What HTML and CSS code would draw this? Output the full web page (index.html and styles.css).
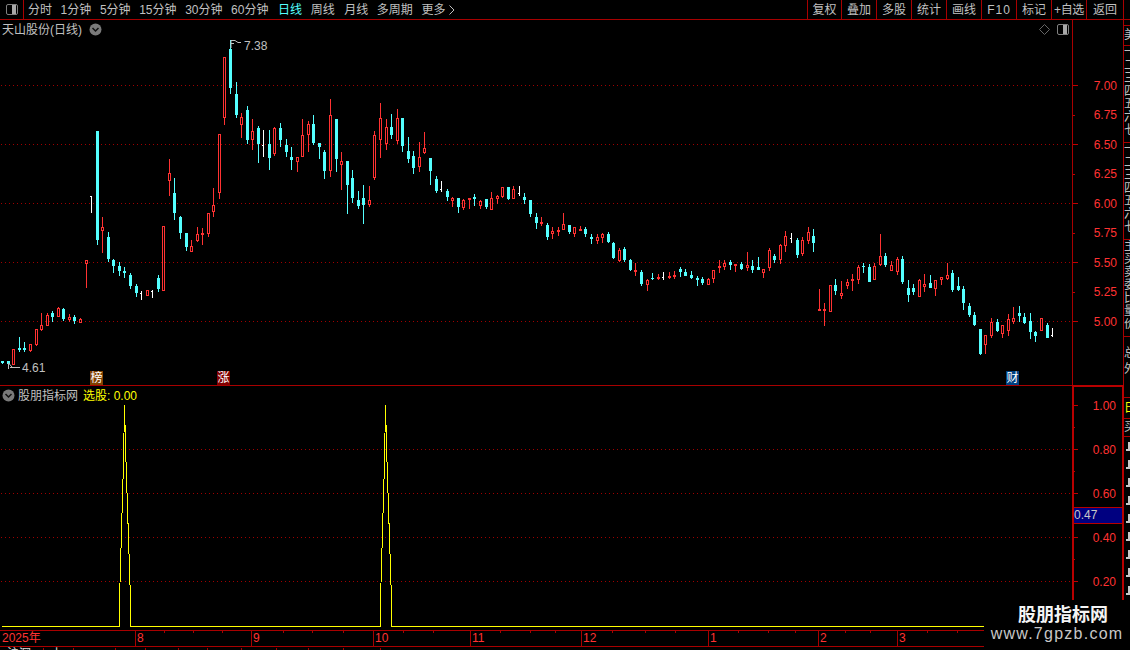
FILE: index.html
```html
<!DOCTYPE html>
<html lang="zh-CN">
<head>
<meta charset="utf-8">
<title>天山股份(日线)</title>
<link rel="stylesheet" href="styles.css">
</head>
<body>
<div class="app">
  <header class="toolbar">
    <div class="panel-btn"><span class="split-icon"></span></div>
    <nav class="periods">
      <span>分时</span><span>1分钟</span><span>5分钟</span><span>15分钟</span><span>30分钟</span><span>60分钟</span>
      <span class="active">日线</span><span>周线</span><span class="month">月线</span><span>多周期</span>
      <span class="more">更多<svg class="chev" width="6" height="10" viewBox="0 0 6 10"><path d="M0.5 0.5 L5 5 L0.5 9.5" fill="none" stroke="#c0c0c0"/></svg></span>
    </nav>
    <div class="actions">
      <span>复权</span><span>叠加</span><span>多股</span><span>统计</span><span>画线</span><span class="latin">F10</span><span>标记</span><span class="narrow">+自选</span><span>返回</span>
    </div>
  </header>

  <section class="row row-price">
    <div class="pane pane-price">
      <svg id="price-chart" class="canvas" width="1072" height="365" viewBox="0 20 1072 365"></svg>
      <div class="pane-title">
        <span>天山股份(日线)</span>
        <svg class="round-icon" width="13" height="13" viewBox="0 0 13 13"><circle cx="6.5" cy="6.5" r="6" fill="#7a7a7a"/><path d="M3.5 5 L6.5 8 L9.5 5" fill="none" stroke="#111" stroke-width="1.5"/></svg>
      </div>
      <div class="pane-tools">
        <svg width="11" height="11" viewBox="0 0 11 11"><path d="M5.5 0.5 L10.5 5.5 L5.5 10.5 L0.5 5.5 Z" fill="none" stroke="#666"/></svg>
        <span class="split-icon"></span>
      </div>
      <span class="badge badge-bang">榜</span>
      <span class="badge badge-zhang">涨</span>
      <span class="badge badge-cai">财</span>
    </div>
    <div class="axis axis-price">
      <span>7.00</span><span>6.75</span><span>6.50</span><span>6.25</span><span>6.00</span><span>5.75</span><span>5.50</span><span>5.25</span><span>5.00</span>
      <svg id="price-ticks" class="ticks" width="8" height="365"></svg>
    </div>
    <aside class="side">
      <div class="side-gap"></div>
      <div class="side-box s20">美</div>
      <div class="side-box s97">一二三四五六七</div>
      <div class="side-box s97">一二三四五六七</div>
      <div class="side-box s97">主买卖委比量价</div>
      <div class="side-box s49">总外</div>
    </aside>
  </section>

  <section class="row row-ind">
    <div class="pane pane-ind">
      <svg id="ind-chart" class="canvas" width="1072" height="244" viewBox="0 386 1072 244"></svg>
      <div class="pane-title pane-title-ind">
        <svg class="round-icon" width="13" height="13" viewBox="0 0 13 13"><circle cx="6.5" cy="6.5" r="6" fill="#7a7a7a"/><path d="M3.5 5 L6.5 8 L9.5 5" fill="none" stroke="#111" stroke-width="1.5"/></svg>
        <span>股朋指标网</span>
        <span class="yellow">选股: 0.00</span>
      </div>
    </div>
    <div class="axis axis-ind">
      <span>1.00</span><span>0.80</span><span>0.60</span><span>0.40</span><span>0.20</span>
      <svg id="ind-ticks" class="ticks" width="8" height="220"></svg>
      <div class="cursor-value">0.47</div>
    </div>
    <aside class="side side-lower">
      <div class="side-box s10"></div>
      <div class="side-box s20 yellow-box">日</div>
      <div class="side-box s19">买</div>
      <div class="side-blocks">
        <i></i><i></i><i></i><i></i><i></i><i></i><i></i><i></i><i></i>
      </div>
    </aside>
  </section>

  <div class="timeline" id="timeline"></div>

  <footer class="status">
    <span class="c1">沪深</span><span class="c2">上</span><span class="c3"></span><span class="c4"></span><span class="c5"></span><span class="c6"></span><span class="c7"></span><span class="c8"></span><span class="c9"></span><span class="c10"></span><span class="c11"></span>
  </footer>

  <div class="watermark">
    <strong>股朋指标网</strong>
    <em>www.7gpzb.com</em>
  </div>
</div>
<script src="chart.js"></script>
</body>
</html>
```
FILE: styles.css
```css
* { box-sizing: border-box; }
html, body { margin: 0; padding: 0; background: #000; }
body { font: 12px/14px "Liberation Sans", "Noto Sans CJK SC", sans-serif; color: #c0c0c0; overflow: hidden; }

.app { position: relative; width: 1130px; height: 650px; overflow: hidden; display: flex; flex-direction: column; }

/* toolbar */
.toolbar { height: 20px; flex: none; display: flex; border-bottom: 1px solid #a80000; }
.panel-btn { width: 24px; border-right: 1px solid #a80000; display: flex; align-items: center; justify-content: center; }
.split-icon { display: block; width: 12px; height: 11px; border: 1px solid #808080; border-radius: 2px; background: linear-gradient(90deg, #000 50%, #a8a8a8 50%, #a8a8a8 90%, #000 90%); }
.periods { display: flex; align-items: center; gap: 8.6px; padding-left: 4px; height: 19px; }
.periods .active { color: #54ffff; margin-left: 1px; }
.periods .month { margin-left: 1px; }
.more { display: flex; align-items: center; gap: 4px; }
.actions { margin-left: auto; margin-right: 6px; display: grid; grid-template-columns: 34px repeat(7, 35px) 37px; height: 19px; border-right: 1px solid #a80000; }
.actions span { border-left: 1px solid #a80000; display: flex; align-items: center; justify-content: center; white-space: nowrap; }
.actions .latin { letter-spacing: 1px; }
.actions .narrow { letter-spacing: -0.4px; }

/* rows */
.row { display: flex; flex: none; }
.row-price { height: 366px; }
.row-ind { height: 244px; }
.pane { position: relative; width: 1072px; flex: none; }
.pane-price { border-bottom: 1px solid #a80000; }
.canvas { position: absolute; left: 0; top: 0; display: block; }

.pane-title { position: relative; display: flex; align-items: center; gap: 7px; padding: 2px 0 0 2px; height: 17px; }
.pane-title-ind { gap: 3px; padding-left: 2px; height: 17px; }
.pane-title-ind .yellow { margin-left: 2px; color: #ffff00; }
.round-icon { display: block; flex: none; }
.pane-tools { position: absolute; top: 4px; right: 3px; display: flex; align-items: center; gap: 7px; }

.badge { position: absolute; top: 351px; width: 13px; height: 14px; color: #fff; text-align: center; line-height: 14px; }
.badge-bang { left: 90px; background: #804000; }
.badge-zhang { left: 217px; background: #800000; }
.badge-cai { left: 1006px; background: #004080; }

/* axes */
.axis { position: relative; width: 52px; flex: none; display: flex; flex-direction: column; color: #ff3232; text-align: right; padding-right: 6px; }
.axis span { display: block; flex: none; }
.axis-price { border-left: 1px solid #a80000; border-right: 1px solid #a80000; padding-top: 58.5px; }
.axis-price span { height: 29.5px; }
.axis-ind { border-left: 2px solid #b80000; border-right: 2px solid #b80000; border-top: 2px solid #b80000; margin-top: -1px; padding-top: 12px; }
.axis-ind span { height: 44px; }
.ticks { position: absolute; left: 0; top: 0; }
.cursor-value { position: absolute; left: 0; right: 0; top: 120px; height: 17px; background: #000080; color: #c8c8c8; text-align: left; line-height: 15px; border-top: 1px solid #b80000; border-bottom: 1px solid #b80000; }

/* right strip */
.side { width: 6px; flex: none; overflow: hidden; }
.side-gap { height: 5px; }
.side-box { border-top: 1px solid #a80000; overflow: hidden; line-height: 13px; width: 12px; word-break: break-all; }
.s20 { height: 20px; padding-top: 3px; }
.s97 { height: 97px; }
.s49 { height: 49px; line-height: 16px; padding-top: 8px; }
.s10 { height: 11px; border-top: 0; }
.s19 { height: 19px; padding-top: 2px; border-bottom: 1px solid #a80000; }
.yellow-box { height: 21px; color: #ffff00; padding-top: 4px; }
.side-blocks { display: flex; flex-direction: column; gap: 9px; padding-top: 5px; }
.side-blocks i {
  display: block; width: 4px; height: 9px; margin-left: 2px;
  background:
    linear-gradient(#c8c8c8, #c8c8c8) right top / 2px 100% no-repeat,
    linear-gradient(#c8c8c8, #c8c8c8) left bottom / 2px 2px no-repeat;
}

/* time axis */
.timeline { position: relative; height: 17px; flex: none; margin-right: 146px; border-top: 1px solid #a80000; border-bottom: 1px solid #a80000; color: #ff3232; }
.time-label { position: absolute; top: 0; height: 15px; padding-left: 1px; border-left: 1px solid #a80000; }
.time-first { border-left: 0; left: 1px; }
.time-tick { position: absolute; top: 0; width: 1px; height: 2px; background: #a80000; }

/* status */
.status { flex: 1; display: flex; color: #e0e0e0; overflow: hidden; margin-right: 146px; line-height: 12px; padding-top: 1px; }
.status span { flex: none; border-right: 1px solid #a80000; padding-left: 7px; white-space: nowrap; }
.c1 { width: 44px; }
.c2 { width: 30px; }
.c3 { width: 42px; }
.c4 { width: 30px; }
.c5 { width: 33px; }
.c6 { width: 29px; }
.c7 { width: 34px; }
.c8 { width: 35px; }
.c9 { width: 32px; }
.c10 { width: 35px; }
.c11 { width: 37px; }

/* watermark */
.watermark { position: absolute; right: 0; bottom: 0; width: 146px; height: 50px; background: #000; display: flex; flex-direction: column; align-items: center; padding-top: 2px; }
.watermark strong { color: #f4f4f4; font: bold 18px/22px "Noto Sans CJK SC", sans-serif; margin-left: 12px; }
.watermark em { color: #c8c8c8; font: normal 16px/20px "Liberation Sans", sans-serif; letter-spacing: 1.25px; white-space: nowrap; }
```
FILE: chart.js
```js
var NS = 'http://www.w3.org/2000/svg';
var CYAN = '#54ffff', RED = '#ff3232', WHITE = '#ffffff', GREY = '#c0c0c0';

function el(parent, name, attrs, text) {
  var n = document.createElementNS(NS, name);
  for (var k in attrs) n.setAttribute(k, attrs[k]);
  if (text) n.textContent = text;
  parent.appendChild(n);
  return n;
}
function box(p, x, y, w, h, fill) {
  if (h > 0) el(p, 'rect', { x: x, y: y, width: w, height: h, fill: fill });
}

/* Candles: [x, kind, high, top, bottom, low] in 3x sample coordinates.
   kind c = falling (filled cyan), r = rising (hollow red), f = flat (filled red),
   w = doji: [x, 'w', high, tick, low] */
var groups = [
 { ox: 0, oy: 120, rows: [
  [7,'c',723,723,729,733],[25,'c',724,724,733,738],[40,'r',688,688,735,735],[58,'c',651,684,690,696],[73,'c',666,684,690,696],
  [91,'r',673,673,693,696],[109,'r',628,628,675,678],[124,'r',579,615,630,633],[142,'r',579,586,617,619],[157,'c',573,579,591,606],
  [175,'r',561,564,590,591],[190,'c',564,567,597,603],[208,'r',582,591,600,605],[223,'c',585,591,603,612],[241,'r',594,597,608,609],
  [259,'r',421,421,432,504],[274,'w',228,228,279],[292,'c',33,33,360,375],[307,'r',291,321,333,399],[325,'c',336,351,417,426],
  [340,'c',417,420,438,459],[358,'c',426,438,453,468],[373,'c',441,453,459,474],[391,'c',459,465,498,507],[409,'c',492,498,519,531],
  [424,'w',513,519,540],[442,'r',511,511,527,527],[457,'w',510,513,534],[475,'c',465,474,507,516],[490,'r',318,318,513,513],
  [508,'r',117,159,183,228],[523,'c',174,219,279,300],[541,'c',288,291,339,357],[559,'c',339,339,381,393],[574,'r',360,378,396,396],
  [592,'r',321,342,363,366],[607,'f',324,339,345,375],[625,'r',279,279,342,351],[640,'r',204,255,276,291],[658,'r',42,42,219,237]
 ]},
 { ox: 220, oy: 30, rows: [
  [13,'r',82,82,265,285],[31,'c',30,57,174,192],[49,'c',156,192,255,264],[64,'r',249,261,285,324],[82,'c',228,240,330,342],
  [97,'r',267,303,330,360],[115,'c',288,294,342,399],[130,'w',300,346,381],[148,'c',300,342,384,420],[163,'r',291,294,372,378],
  [181,'c',279,294,330,351],[199,'c',327,345,366,381],[214,'c',351,381,390,420],[232,'r',381,381,396,426],[247,'r',267,315,381,381],
  [265,'r',273,282,315,366],[280,'c',255,282,339,345],[298,'c',339,339,351,387],[313,'c',360,366,423,447],[331,'r',207,255,423,441],
  [349,'c',267,267,387,426],[364,'r',366,393,405,480],[382,'c',393,393,465,552],[397,'c',420,444,504,519],[415,'c',483,510,528,537],
  [430,'c',465,504,525,582],[448,'r',468,510,525,531],[463,'r',303,315,444,450],[481,'r',219,264,330,384],[499,'r',267,291,342,360],
  [514,'c',252,291,315,327],[532,'r',237,264,333,342],[547,'c',264,264,348,366],[565,'c',321,363,387,399],[580,'c',363,378,414,432],
  [598,'r',336,381,411,426],[613,'r',306,354,369,372],[631,'c',384,384,423,465],[649,'c',438,447,483,489],[664,'w',453,478,486],
  [682,'c',477,483,501,513],[697,'r',501,504,513,531],[715,'c',504,504,531,549]
 ]},
 { ox: 450, oy: 170, rows: [
  [40,'r',87,90,114,120],[58,'f',84,84,90,117],[73,'c',72,81,87,108],[91,'r',90,93,108,117],[109,'c',87,87,111,117],
  [124,'r',66,84,120,120],[142,'r',75,78,87,102],[157,'r',51,51,81,84],[175,'c',51,51,87,90],[190,'r',48,57,87,87],
  [208,'w',48,69,78],[223,'c',69,81,90,102],[241,'c',90,90,132,141],[259,'c',129,141,159,177],[274,'f',141,156,162,168],
  [292,'c',159,165,201,210],[307,'r',171,183,192,207],[325,'f',171,180,186,198],[340,'r',129,162,180,180],[358,'c',165,165,186,192],
  [373,'r',171,171,192,201],[391,'f',168,177,183,183],[406,'c',171,177,192,201],[424,'c',192,201,207,222],[442,'r',192,201,213,222],
  [457,'r',189,192,204,219],[475,'c',186,192,216,219],[490,'c',216,219,264,267],[508,'r',234,240,273,276],[523,'c',231,237,270,276],
  [541,'c',267,270,300,303],[556,'f',279,300,306,318],[574,'c',300,306,342,348],[592,'r',327,330,345,363],[607,'c',309,324,327,330],
  [625,'f',312,321,327,330],[640,'w',306,321,330],[658,'f',306,318,324,327],[673,'f',303,315,321,327],[691,'c',291,297,306,321],
  [706,'c',297,306,318,318],[724,'c',303,315,324,327],[742,'c',318,324,330,348],[757,'c',321,327,339,345],[775,'r',324,327,345,345],
  [790,'r',300,300,327,339],[808,'f',270,288,294,309],[823,'r',270,279,291,300],[841,'c',270,276,285,300],[856,'f',282,282,288,306],
  [874,'c',276,282,297,300],[892,'r',246,285,294,303]
 ]},
 { ox: 750, oy: 220, rows: [
  [7,'c',120,138,150,159],[25,'c',111,141,150,150],[40,'r',147,147,159,174],[58,'r',84,90,144,153],[73,'c',102,108,120,129],
  [91,'r',72,75,120,132],[106,'r',33,48,78,96],[124,'w',39,54,69],[142,'c',54,60,105,114],[157,'r',51,60,102,108],
  [175,'r',21,36,63,72],[190,'c',27,48,69,96],[208,'f',207,267,273,273],[223,'f',249,267,273,318],[241,'r',195,195,276,276],
  [256,'c',177,195,213,225],[274,'r',183,219,228,237],[292,'r',177,186,198,207],[307,'f',162,177,183,213],[325,'r',135,141,180,192],
  [340,'c',129,138,141,159],[358,'c',132,141,186,186],[373,'r',129,138,180,180],[391,'r',42,108,135,138],[406,'c',99,108,135,141],
  [424,'r',123,135,153,153],[442,'r',111,117,156,165],[457,'c',108,117,186,192],[475,'c',180,204,225,246],[490,'c',192,204,216,225],
  [508,'r',177,180,231,231],[523,'r',162,192,201,216],[541,'c',165,189,204,204],[556,'r',180,180,207,228],[574,'r',171,171,180,195],
  [592,'r',129,165,177,180],[607,'c',150,159,210,216],[625,'c',171,198,210,213],[640,'c',198,207,249,270],[658,'c',249,258,285,291],
  [673,'c',276,285,315,318],[691,'c',327,327,402,405],[706,'r',345,345,375,402],[724,'r',294,306,348,354],[742,'c',297,306,333,336],
  [757,'r',315,315,342,354],[775,'r',282,297,333,348],[790,'r',261,294,306,312],[808,'c',258,279,288,306],[823,'c',279,291,309,312],
  [841,'c',279,303,336,357],[856,'c',333,336,348,366],[874,'r',294,294,333,333],[892,'c',309,315,354,354],[907,'w',324,346,351]
 ]}
];

function drawCandle(p, g, r) {
  var x = Math.floor(g.ox + r[0] / 3);
  var Y = function (z) { return Math.round(g.oy + z / 3); };
  var kind = r[1];
  if (kind === 'w') {
    box(p, x, Y(r[2]), 1, Y(r[4]) - Y(r[2]), WHITE);
    box(p, x - 1, Y(r[3]), 1, 1, WHITE);
    return;
  }
  var hi = Y(r[2]), top = Y(r[3]), bot = Y(r[4]), lo = Y(r[5]);
  var color = kind === 'c' ? CYAN : RED;
  box(p, x, hi, 1, lo - hi, color);
  if (kind === 'r') {
    el(p, 'rect', { x: x - 0.5, y: top + 0.5, width: 2, height: Math.max(bot - top - 1, 1), fill: '#000', stroke: RED, 'stroke-width': 1 });
  } else {
    box(p, x - 1, top, 3, Math.max(bot - top, 1), color);
  }
}

function gridLine(p, y) {
  for (var x = 1; x < 1072; x += 4) box(p, x, y, 1, 1, '#a00000');
}

var price = document.getElementById('price-chart');
[85, 144, 203, 262, 321].forEach(function (y) { gridLine(price, y); });
groups.forEach(function (g) { g.rows.forEach(function (r) { drawCandle(price, g, r); }); });

/* high / low annotations */
el(price, 'path', { d: 'M231 48V40.5H235M231 43.5H234M235 40.5L238 42.5H241', fill: 'none', stroke: GREY });
el(price, 'text', { x: 244, y: 50, fill: GREY, 'font-size': 12, 'font-family': 'Liberation Sans, sans-serif' }, '7.38');
el(price, 'path', { d: 'M8.5 363V369M8.5 363L12 367M10 367.5H20', fill: 'none', stroke: GREY });
el(price, 'text', { x: 22, y: 372, fill: GREY, 'font-size': 12, 'font-family': 'Liberation Sans, sans-serif' }, '4.61');

/* indicator */
var ind = document.getElementById('ind-chart');
[449, 493, 537, 581].forEach(function (y) { gridLine(ind, y); });
el(ind, 'polyline', {
  points: '2,626.5 119.5,626.5 119.5,600 123.5,462 124.5,405 126,462 130.5,600 130.5,626.5 380.5,626.5 380.5,600 384.5,462 385.5,405 387,462 391.5,600 391.5,626.5 984,626.5',
  fill: 'none', stroke: '#ffff00', 'stroke-width': 1, 'shape-rendering': 'crispEdges'
});

/* axis ticks */
var pt = document.getElementById('price-ticks');
[65, 95, 124, 154, 183, 213, 242, 272, 301].forEach(function (y, i) {
  box(pt, 0, y, i % 2 === 0 ? 5 : 2, 1, '#c00000');
});
var it = document.getElementById('ind-ticks');
[18, 40, 62, 84, 106, 128, 150, 172, 194].forEach(function (y, i) {
  box(it, 0, y, i % 2 === 0 ? 4 : 1, 1, '#c00000');
});

/* time axis */
var tl = document.getElementById('timeline');
[['8', 135], ['9', 251], ['10', 373], ['11', 470], ['12', 581], ['1', 708], ['2', 818], ['3', 897]].forEach(function (m) {
  var s = document.createElement('span');
  s.className = 'time-label';
  s.style.left = m[1] + 'px';
  s.textContent = m[0];
  tl.appendChild(s);
});
var first = document.createElement('span');
first.className = 'time-label time-first';
first.textContent = '2025年';
tl.appendChild(first);
[164, 193, 222, 283, 312, 343, 403, 433, 500, 530, 555, 612, 645, 675, 738, 768, 795, 845, 870, 927, 957].forEach(function (x) {
  var t = document.createElement('i');
  t.className = 'time-tick';
  t.style.left = x + 'px';
  tl.appendChild(t);
});
```
